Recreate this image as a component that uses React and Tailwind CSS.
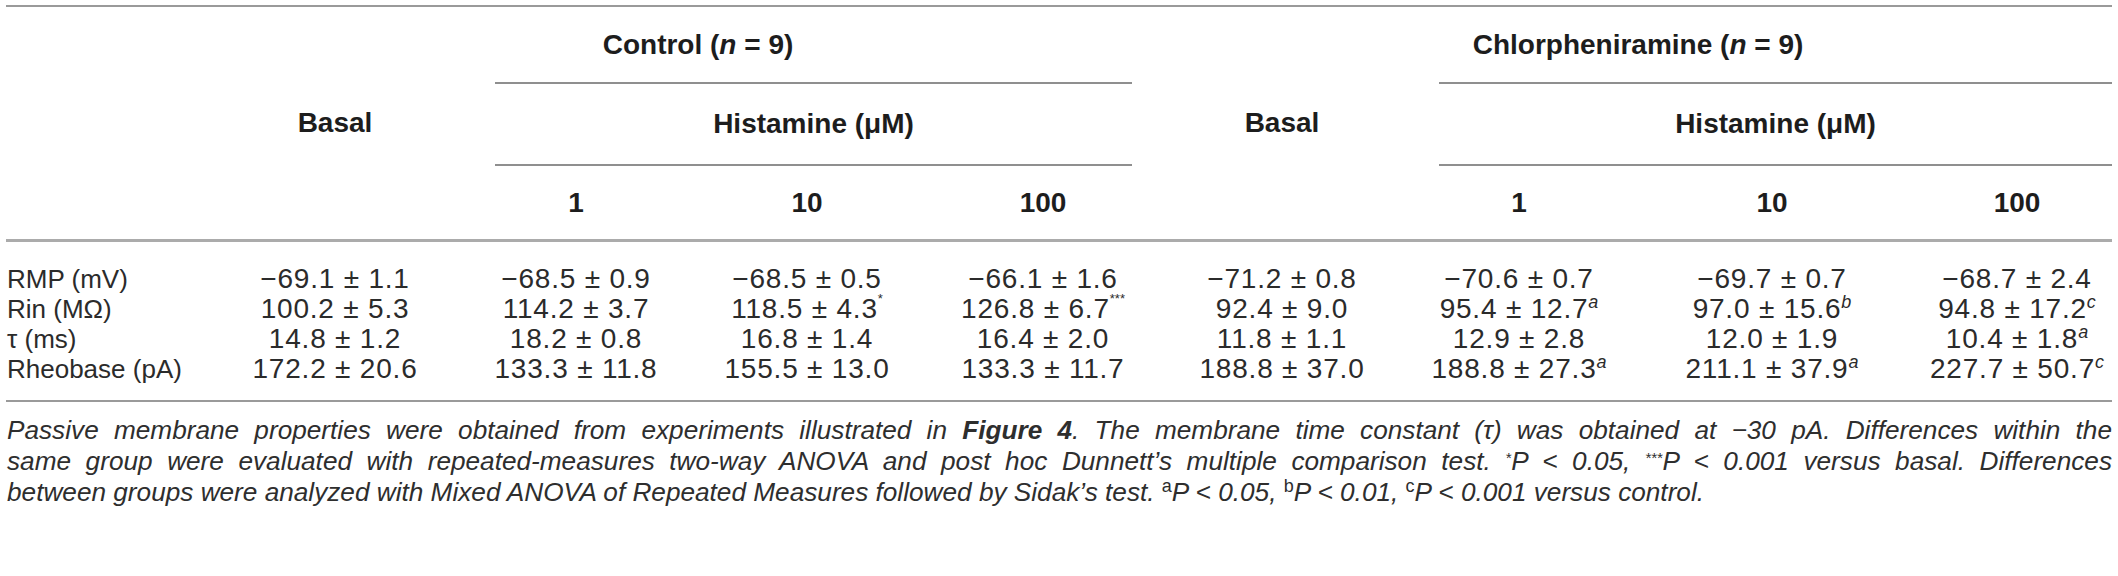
import React from "react";

const rows = [
  {
    label: "RMP (mV)",
    cells: [
      ["−69.1 ± 1.1"], ["−68.5 ± 0.9"], ["−68.5 ± 0.5"], ["−66.1 ± 1.6"],
      ["−71.2 ± 0.8"], ["−70.6 ± 0.7"], ["−69.7 ± 0.7"], ["−68.7 ± 2.4"],
    ],
  },
  {
    label: "Rin (MΩ)",
    cells: [
      ["100.2 ± 5.3"], ["114.2 ± 3.7"], ["118.5 ± 4.3", "*", "star"], ["126.8 ± 6.7", "***", "star"],
      ["92.4 ± 9.0"], ["95.4 ± 12.7", "a"], ["97.0 ± 15.6", "b"], ["94.8 ± 17.2", "c"],
    ],
  },
  {
    label: "τ (ms)",
    cells: [
      ["14.8 ± 1.2"], ["18.2 ± 0.8"], ["16.8 ± 1.4"], ["16.4 ± 2.0"],
      ["11.8 ± 1.1"], ["12.9 ± 2.8"], ["12.0 ± 1.9"], ["10.4 ± 1.8", "a"],
    ],
  },
  {
    label: "Rheobase (pA)",
    cells: [
      ["172.2 ± 20.6"], ["133.3 ± 11.8"], ["155.5 ± 13.0"], ["133.3 ± 11.7"],
      ["188.8 ± 37.0"], ["188.8 ± 27.3", "a"], ["211.1 ± 37.9", "a"], ["227.7 ± 50.7", "c"],
    ],
  },
];

const grid =
  "grid grid-cols-[188px_282px_200px_262px_210px_268px_206px_300px_190px]";

function Cell({ v, sup, kind }) {
  return (
    <div className="flex items-center justify-center text-[28px] leading-[30px] tracking-[0.8px] text-[#2b2b2b]">
      <span>
        {v}
        {sup &&
          (kind === "star" ? (
            <sup className="text-[13px] tracking-normal top-[-15px]">{sup}</sup>
          ) : (
            <sup className="text-[18px] italic tracking-normal top-[-10px]">{sup}</sup>
          ))}
      </span>
    </div>
  );
}

export default function App() {
  return (
    <div className="w-[2118px] h-[576px] bg-white font-['Liberation_Sans',Arial,sans-serif] text-[#1d1d1d]">
      <div className="ml-[6px] w-[2106px] pt-[5px]">
        {/* Header */}
        <div
          className={`${grid} grid-rows-[75px_84px_73px] border-t-2 border-b-[3px] border-t-[#9a9a9a] border-b-[#ababab] font-bold text-[28px] leading-[32px]`}
        >
          <div className="col-start-2 col-end-3 row-start-1 row-end-4 flex items-center justify-center">
            Basal
          </div>
          <div className="col-start-2 col-end-6 row-start-1 row-end-2 flex items-center justify-center pl-[54px]">
            <span>
              Control (<i>n</i> = 9)
            </span>
          </div>
          <div className="col-start-3 col-end-6 row-start-2 row-end-3 ml-[19px] mr-[16px] border-t-2 border-b-2 border-[#8f8f8f] flex items-center justify-center">
            Histamine (μM)
          </div>
          <div className="col-start-3 col-end-4 row-start-3 flex items-center justify-center">1</div>
          <div className="col-start-4 col-end-5 row-start-3 flex items-center justify-center">10</div>
          <div className="col-start-5 col-end-6 row-start-3 flex items-center justify-center">100</div>

          <div className="col-start-6 col-end-7 row-start-1 row-end-4 flex items-center justify-center">
            Basal
          </div>
          <div className="col-start-6 col-end-10 row-start-1 row-end-2 flex items-center justify-center pl-[16px]">
            <span>
              Chlorpheniramine (<i>n</i> = 9)
            </span>
          </div>
          <div className="col-start-7 col-end-10 row-start-2 row-end-3 ml-[23px] border-t-2 border-b-2 border-[#8f8f8f] flex items-center justify-center">
            Histamine (μM)
          </div>
          <div className="col-start-7 col-end-8 row-start-3 flex items-center justify-center">1</div>
          <div className="col-start-8 col-end-9 row-start-3 flex items-center justify-center">10</div>
          <div className="col-start-9 col-end-10 row-start-3 flex items-center justify-center">100</div>
        </div>

        {/* Body */}
        <div className="pt-[22px] pb-[16px] border-b-2 border-[#9a9a9a]">
          {rows.map((r) => (
            <div key={r.label} className={`${grid} h-[30px]`}>
              <div className="flex items-center pl-[1px] text-[26px] leading-[30px] text-[#2b2b2b]">
                {r.label}
              </div>
              {r.cells.map((c, i) => (
                <Cell key={i} v={c[0]} sup={c[1]} kind={c[2]} />
              ))}
            </div>
          ))}
        </div>

        {/* Caption */}
        <div className="pt-[13px] pl-[1px] italic text-[26.2px] leading-[31px] text-[#2e2e2e]">
          <div className="text-justify [text-align-last:justify]">
            Passive membrane properties were obtained from experiments illustrated in{" "}
            <b>Figure 4</b>. The membrane time constant (τ) was obtained at −30 pA. Differences within the
          </div>
          <div className="text-justify [text-align-last:justify]">
            same group were evaluated with repeated-measures two-way ANOVA and post hoc Dunnett’s multiple
            comparison test. <sup className="text-[15px]">*</sup>P &lt; 0.05,{" "}
            <sup className="text-[15px]">***</sup>P &lt; 0.001 versus basal. Differences
          </div>
          <div>
            between groups were analyzed with Mixed ANOVA of Repeated Measures followed by Sidak’s test.{" "}
            <sup className="not-italic text-[18px]">a</sup>P &lt; 0.05,{" "}
            <sup className="not-italic text-[18px]">b</sup>P &lt; 0.01,{" "}
            <sup className="not-italic text-[18px]">c</sup>P &lt; 0.001 versus control.
          </div>
        </div>
      </div>
    </div>
  );
}
